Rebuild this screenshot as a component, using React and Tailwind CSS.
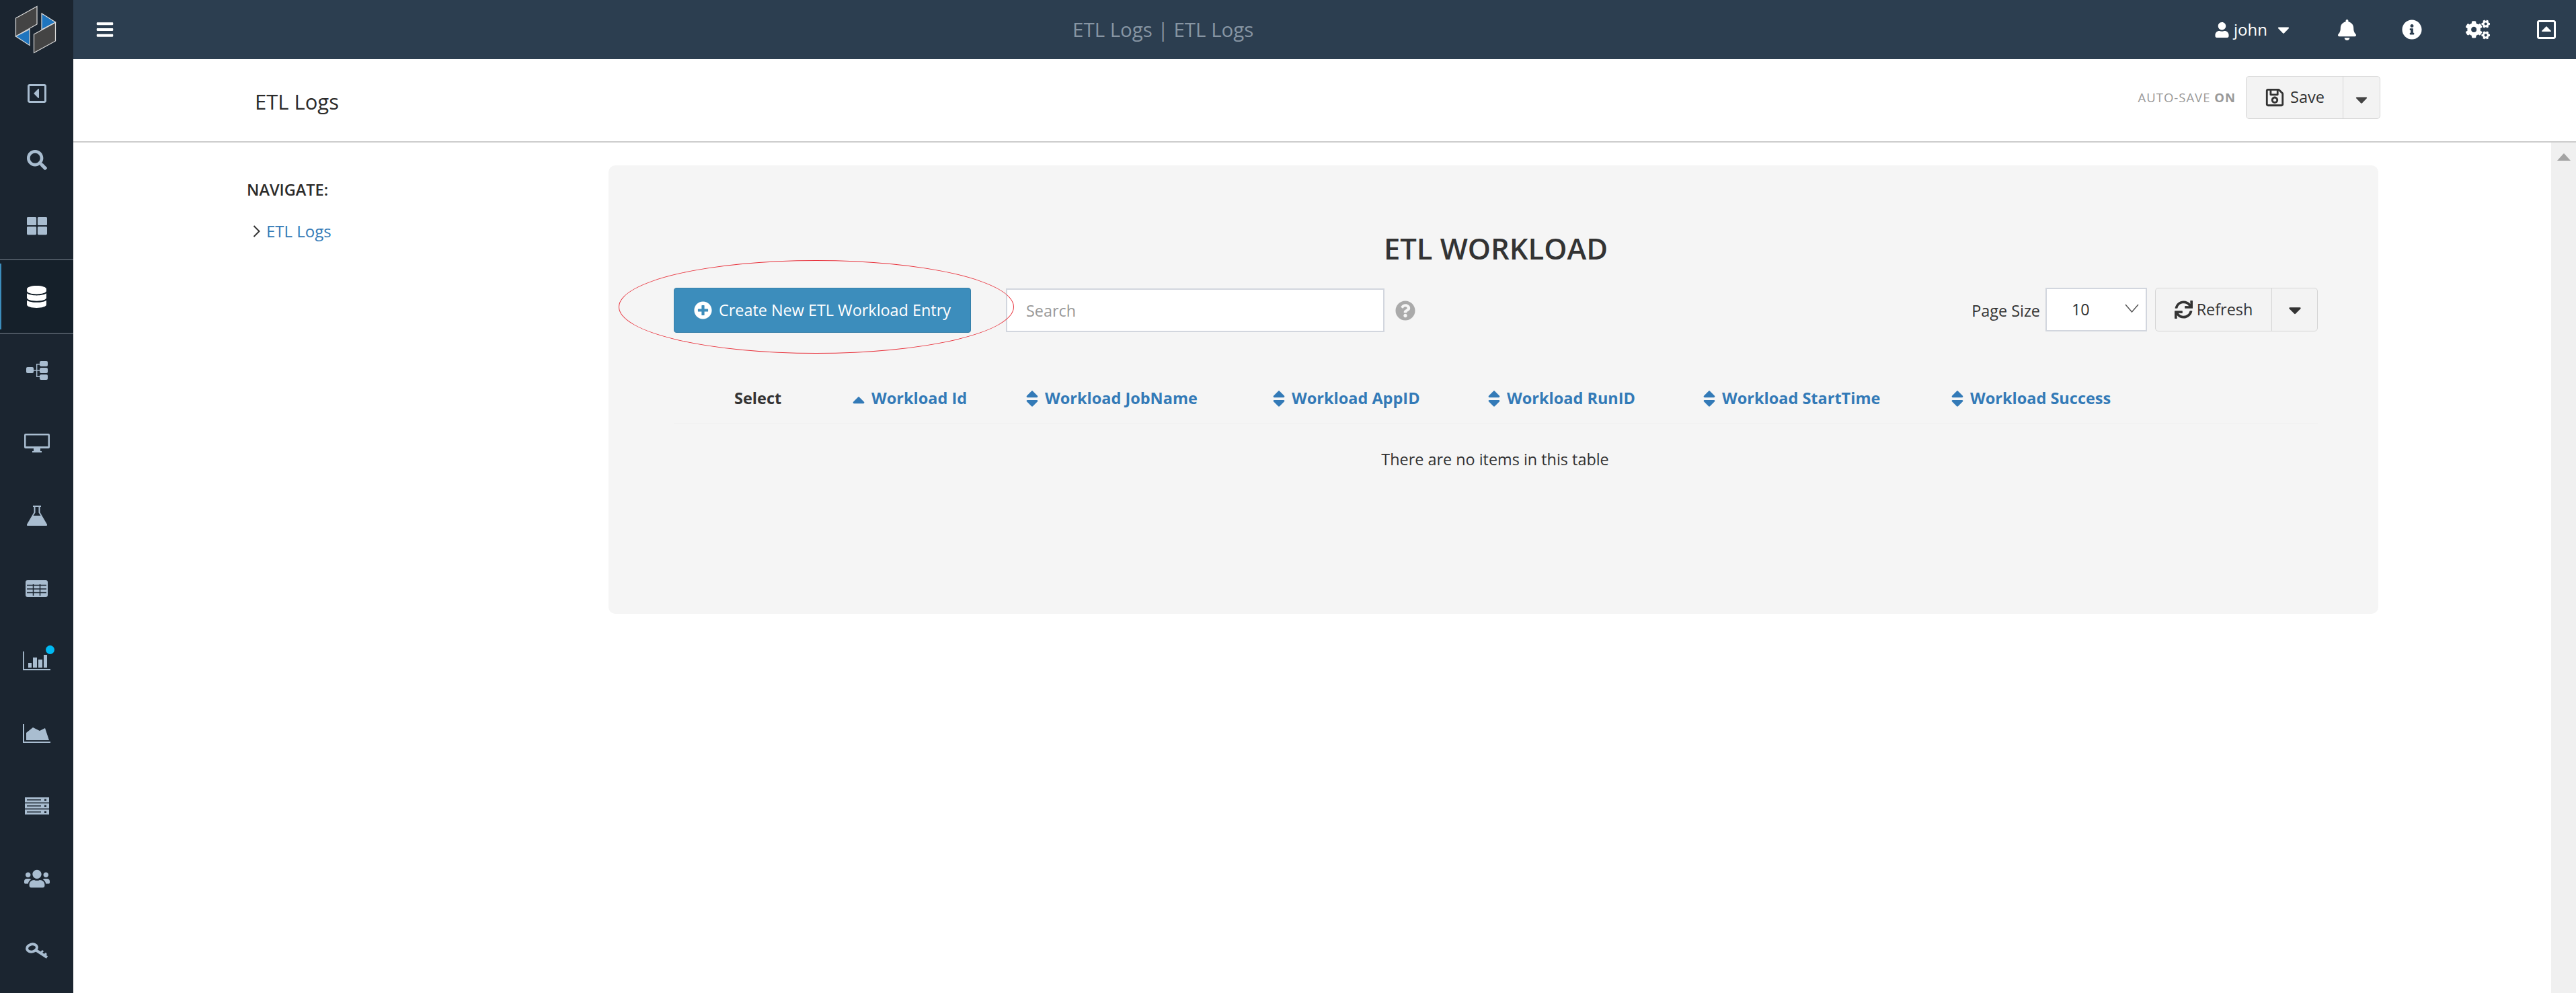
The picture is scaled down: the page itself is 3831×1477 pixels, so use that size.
import React from 'react';
import {
    FaBars, FaBell, FaCaretDown, FaCogs, FaInfoCircle, FaPlusCircle, FaQuestionCircle,
    FaRegCaretSquareLeft, FaRegCaretSquareUp, FaRegSave, FaSearch, FaSort, FaSortUp, FaSync,
    FaThLarge, FaUser, FaUsers, FaDatabase,
} from 'react-icons/fa';

const Logo = () => (
    <svg width="62" height="72" viewBox="22 7 62 72">
        <polygon points="23.5,26 55,8.500 55,35 23.500,53" fill="#444" stroke="#ddd" strokeWidth="1.2" />
        <polygon points="23.5,53 44,42.500 44,66.500" fill="#1f75be" stroke="#ddd" strokeWidth="1.2" />
        <polygon points="62,19 82.500,32 62,43" fill="#1f75be" stroke="#ddd" strokeWidth="1.2" />
        <polygon points="50.5,50 82.500,32.500 82.500,60 50.500,77.500" fill="#444" stroke="#ddd" strokeWidth="1.2" />
    </svg>
);

const SiteMap = () => (
    <svg width="32" height="32" viewBox="0 0 32 32" fill="currentColor">
        <rect x="0" y="11" width="11" height="9" rx="2" />
        <rect x="20" y="2" width="12" height="8" rx="2" />
        <rect x="20" y="12" width="12" height="8" rx="2" />
        <rect x="20" y="22" width="12" height="8" rx="2" />
        <path d="M11 15h9v1.400h-9zM15 6h5v1.400h-3.600v17.200H20V26h-5z" />
    </svg>
);

const Desktop = () => (
    <svg width="38" height="29" viewBox="0 0 38 29" fill="currentColor">
        <path fillRule="evenodd" d="M2 0h34a2 2 0 0 1 2 2v18a2 2 0 0 1-2 2H2a2 2 0 0 1-2-2V2a2 2 0 0 1 2-2zM2.500 2.500v16.500h33V2.500z" />
        <path d="M14 22h10v4h-10zM12 26h14v2H12z" />
    </svg>
);

const Flask = () => (
    <svg width="30" height="30" viewBox="0 0 30 30" fill="currentColor">
        <path fillRule="evenodd" d="M9 0h12v2h-1.500v8L30 28a1.500 1.500 0 0 1-1 2H1a1.500 1.500 0 0 1-1-2L10.500 10V2H9zM12.500 2v8.500L9.500 15h11l-3-4.500V2z" />
    </svg>
);

const TableIcon = () => (
    <svg width="33" height="25" viewBox="0 0 33 25">
        <rect width="33" height="25" rx="3" fill="currentColor" />
        <path d="M2 7.500h29M2 13h29M2 18.500h29M11.500 6v17M21.500 6v17" stroke="#1b2530" strokeWidth="1.500" />
    </svg>
);

const BarChart = () => (
    <svg width="41" height="28" viewBox="0 0 41 28" fill="currentColor">
        <path d="M0 0h1.800v26H41v2H0z" />
        <rect x="8" y="17" width="5" height="7" />
        <rect x="15" y="9" width="6" height="15" />
        <rect x="23" y="12" width="6" height="12" />
        <rect x="31" y="5" width="5" height="19" />
    </svg>
);

const AreaChart = () => (
    <svg width="41" height="28" viewBox="0 0 41 28" fill="currentColor">
        <path d="M0 0h2v26h39v2H0z" />
        <path d="M5 24V13l10-8 10 5 8-4 6 18z" />
    </svg>
);

const Server = () => (
    <svg width="36" height="26" viewBox="0 0 36 26" fill="currentColor">
        <path fillRule="evenodd" d="M0 0h36v7.500H0zM3 3v1.400h21V3zM29 2.500v2.500h3V2.500z" />
        <path fillRule="evenodd" d="M0 9h36v7.500H0zM3 12v1.400h21V12zM29 11.500v2.500h3v-2.500z" />
        <path fillRule="evenodd" d="M0 18h36v7.500H0zM3 21v1.400h21V21zM29 20.500v2.500h3v-2.500z" />
    </svg>
);

const KeyIcon = () => (
    <svg width="34" height="28" viewBox="0 0 34 28" fill="none" stroke="currentColor">
        <ellipse cx="9.500" cy="9" rx="7.500" ry="5.500" strokeWidth="4" transform="rotate(-15 9.500 9)" />
        <path d="M15 12l17 11" strokeWidth="4" />
        <path d="M22 17l4-4M27 20.500l4-3.500" strokeWidth="3" />
    </svg>
);

const SideIcon = ({ children, className = 'h-[108px]', dot }) => (
    <div className={`flex items-center justify-center text-[#a9bdd0] ${className}`}>
        <span className="relative flex items-center justify-center">
            {children}
            {dot && <span className="absolute -top-[9px] -right-[6px] w-[13px] h-[13px] rounded-full bg-[#00b9f2]" />}
        </span>
    </div>
);

const Sidebar = () => (
    <aside className="w-[109px] shrink-0 bg-[#1b2530] flex flex-col">
        <div className="h-[88px] flex items-center justify-center pr-[3px]"><Logo /></div>
        <SideIcon className="h-[102px]"><FaRegCaretSquareLeft size={32} /></SideIcon>
        <SideIcon className="h-[96px]"><FaSearch size={30} /></SideIcon>
        <SideIcon className="h-[99px]"><FaThLarge size={30} /></SideIcon>
        <div className="h-[112px] border-y-2 border-[#4b5560] bg-[#15202a] relative flex items-center justify-center text-white">
            <span className="absolute left-0 top-[5px] bottom-[5px] w-[2px] bg-[#3c8dbc]" />
            <FaDatabase size={33} />
        </div>
        <SideIcon><SiteMap /></SideIcon>
        <SideIcon><Desktop /></SideIcon>
        <SideIcon><Flask /></SideIcon>
        <SideIcon><TableIcon /></SideIcon>
        <SideIcon dot><BarChart /></SideIcon>
        <SideIcon><AreaChart /></SideIcon>
        <SideIcon><Server /></SideIcon>
        <SideIcon><FaUsers size={38} /></SideIcon>
        <SideIcon><KeyIcon /></SideIcon>
    </aside>
);

const TopBar = () => (
    <header className="h-[88px] bg-[#2c3e50] flex items-center text-white">
        <FaBars size={28} className="ml-[33px]" />
        <div className="ml-[1425px] text-[29.5px] text-[#8795a3] whitespace-nowrap">ETL Logs | ETL Logs</div>
        <div className="ml-auto flex items-center mr-[28px]">
            <FaUser size={23} />
            <span className="ml-[6px] text-[24px]">john</span>
            <FaCaretDown size={28} className="ml-[10px]" />
            <FaBell size={31} className="ml-[65px]" />
            <FaInfoCircle size={30} className="ml-[66px]" />
            <FaCogs size={36} className="ml-[65px]" />
            <FaRegCaretSquareUp size={32} className="ml-[68px]" />
        </div>
    </header>
);

const SubHeader = () => (
    <div className="h-[124px] border-b-2 border-[#cccccc] flex items-center">
        <h1 className="ml-[270px] mt-[4px] text-[31px] text-[#2b2b2b]">ETL Logs</h1>
        <div className="ml-auto mr-[291px] mb-[8px] flex items-center">
            <span className="text-[18.5px] tracking-[1px] text-[#999]">AUTO-SAVE <b>ON</b></span>
            <div className="ml-[15px] h-[64px] flex border border-[#d5d5d5] rounded-[5px] bg-[#f3f3f3] text-[#333]">
                <div className="w-[144px] flex items-center justify-center gap-[8px] border-r border-[#d5d5d5] text-[23.5px]">
                    <FaRegSave size={30} />Save
                </div>
                <div className="w-[54px] flex items-center justify-center pt-[6px]"><FaCaretDown size={28} className="text-[#444]" /></div>
            </div>
        </div>
    </div>
);

const SortHead = ({ label, first, className }) => (
    <div className={`flex items-center gap-[4px] -ml-[6px] mr-[6px] text-[#337ab7] font-bold ${className}`}>
        {first ? <FaSortUp size={30} className="translate-y-[9px]" /> : <FaSort size={30} />}
        {label}
    </div>
);

const EtlPanel = () => (
    <section className="w-[2632px] h-[667px] mt-[34px] bg-[#f5f5f5] rounded-[10px] pl-[97px] pr-[90px] flex flex-col text-[#333] text-[23.4px] shrink-0">
        <h2 className="mt-[96px] text-center text-[43.5px] leading-[56px] font-semibold">ETL WORKLOAD</h2>
        <div className="mt-[30px] flex items-start">
            <div className="relative">
                {/* hand-drawn highlight around the create button */}
                <span className="absolute -left-[82px] -top-[41px] w-[588px] h-[139px] rounded-[50%] border border-[#e8303a]" />
                <button className="relative w-[442px] h-[67px] rounded-[4px] bg-[#3c8dbc] border border-[#367fa9] text-white flex items-center justify-center gap-[10px]">
                    <FaPlusCircle size={27} />Create New ETL Workload Entry
                </button>
            </div>
            <input placeholder="Search" className="ml-[52px] mt-[1px] w-[563px] h-[65px] bg-white border-2 border-[#d2d6de] px-[28px] placeholder:text-[#999]" />
            <FaQuestionCircle size={30} className="ml-[16px] mt-[19px] text-[#aaa]" />
            <span className="ml-auto mt-[17px]">Page Size</span>
            <div className="ml-[8px] w-[151px] h-[65px] bg-white border-2 border-[#d2d6de] flex items-center justify-between pl-[37px] pr-[10px]">
                10
                <svg width="21" height="13" viewBox="0 0 21 13" fill="none" stroke="#555" strokeWidth="1.500" className="-mt-[4px]"><path d="M1 1l9.500 11L20 1" /></svg>
            </div>
            <div className="ml-[12px] w-[242px] h-[65px] flex border border-[#d5d5d5] rounded-[5px] bg-[#f3f3f3]">
                <div className="w-[173px] flex items-center justify-center gap-[6px] border-r border-[#d5d5d5]">
                    <FaSync size={27} />Refresh
                </div>
                <div className="flex-1 flex items-center justify-center"><FaCaretDown size={30} /></div>
            </div>
        </div>
        <div className="mt-[61px] h-[74px] flex items-center border-b border-[#f0f0f0] whitespace-nowrap text-[23.5px]">
            <span className="pl-[90px] w-[266px] font-bold">Select</span>
            <SortHead first label="Workload Id" className="w-[258px]" />
            <SortHead label="Workload JobName" className="w-[367px]" />
            <SortHead label="Workload AppID" className="w-[320px]" />
            <SortHead label="Workload RunID" className="w-[320px]" />
            <SortHead label="Workload StartTime" className="w-[369px]" />
            <SortHead label="Workload Success" />
        </div>
        <p className="mt-[36px] text-center pr-[2px]">There are no items in this table</p>
    </section>
);

export default function App() {
    return (
        <div className="h-[1477px] w-[3831px] flex overflow-hidden bg-white" style={{ fontFamily: '"Open Sans", sans-serif' }}>
            <Sidebar />
            <div className="flex-1 flex flex-col min-w-0">
                <TopBar />
                <SubHeader />
                <div className="flex-1 flex relative">
                    <nav className="w-[796px] shrink-0 pl-[258px] pt-[53px] text-[#2b2b2b]">
                        <div className="text-[23.5px] font-semibold">NAVIGATE:</div>
                        <div className="mt-[26px] flex items-center text-[24px] text-[#337ab7]">
                            <svg width="11" height="18" viewBox="0 0 11 18" fill="none" stroke="#333" strokeWidth="2" className="ml-[9px]"><path d="M1.500 1l8 8-8 8" /></svg>
                            <span className="ml-[9px]">ETL Logs</span>
                        </div>
                    </nav>
                    <EtlPanel />
                    <div className="absolute right-0 top-0 bottom-0 w-[37px] bg-[#f0f0f0] flex justify-center pt-[16px]">
                        <span className="w-0 h-0 border-x-[10px] border-x-transparent border-b-[11px] border-b-[#a3a3a3]" />
                    </div>
                </div>
            </div>
        </div>
    );
}
